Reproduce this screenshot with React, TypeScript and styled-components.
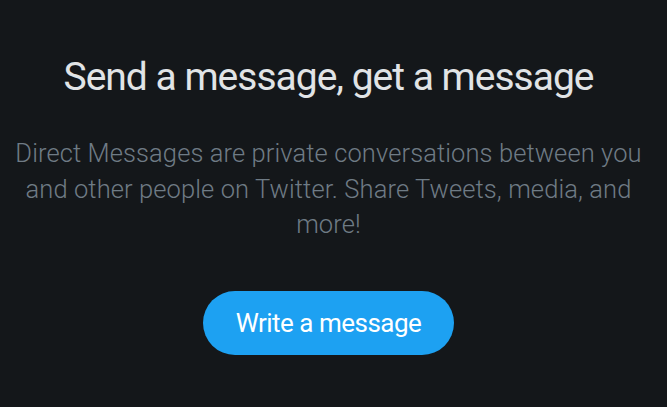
import React from "react";
import styled, { createGlobalStyle } from "styled-components";

const Global = createGlobalStyle`
  html, body { margin: 0; padding: 0; background: #14171a; }
  body { font-family: Roboto, "Noto Sans", sans-serif; }
`;

const Page = styled.main`
  width: 667px;
  height: 407px;
  box-sizing: border-box;
  padding: 52px 23px 0 13px;
  display: flex;
  flex-direction: column;
  align-items: center;
  background: #14171a;
`;

const Title = styled.h1`
  margin: 0;
  font-size: 39px;
  font-weight: 400;
  line-height: 50px;
  color: #e1e4e6;
  letter-spacing: -1px;
  text-align: center;
  white-space: nowrap;
`;

const Description = styled.p`
  margin: 34px 0 0;
  font-size: 25.5px;
  font-weight: 300;
  line-height: 35.5px;
  color: #6f7b85;
  text-align: center;
  letter-spacing: 0.1px;
`;

const WriteButton = styled.button`
  margin-top: 48px;
  width: 251px;
  height: 64px;
  flex-shrink: 0;
  border: none;
  border-radius: 32px;
  background: #1da1f2;
  color: #ffffff;
  font-family: Roboto, "Noto Sans", sans-serif;
  font-size: 26px;
  font-weight: 400;
  letter-spacing: -0.5px;
  cursor: pointer;
`;

export default function App() {
  return (
    <>
      <Global />
      <Page>
        <Title>Send a message, get a message</Title>
        <Description>
          Direct Messages are private conversations between you and other people on Twitter. Share Tweets, media, and more!
        </Description>
        <WriteButton>Write a message</WriteButton>
      </Page>
    </>
  );
}
